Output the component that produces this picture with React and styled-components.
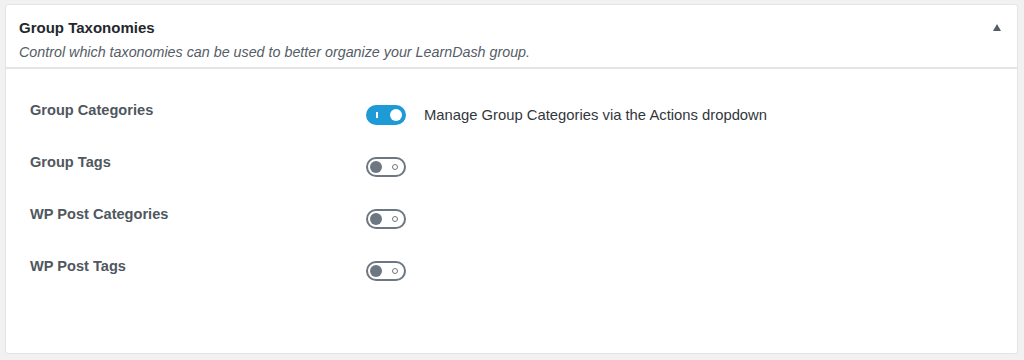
import React from 'react'
import styled, { createGlobalStyle } from 'styled-components'

const GlobalStyle = createGlobalStyle`
  body {
    margin: 0;
    background: #f1f1f1;
    font-family: "Liberation Sans", Arial, sans-serif;
  }
`

const Panel = styled.div`
  margin: 4px 6px 0 5px;
  height: 350px;
  box-sizing: border-box;
  background: #fff;
  border: 1px solid #e2e4e7;
  border-radius: 3px;
  display: flex;
  flex-direction: column;
`

const Header = styled.div`
  position: relative;
  height: 64px;
  box-sizing: border-box;
  padding: 13px 13px 0;
  border-bottom: 2px solid #e2e4e7;
`

const Title = styled.h2`
  margin: 0;
  font-size: 15px;
  line-height: 20px;
  font-weight: 700;
  color: #23282d;
`

const Subtitle = styled.p`
  margin: 4px 0 0;
  font-size: 14.3px;
  line-height: 20px;
  font-style: italic;
  color: #555d66;
`

const Collapse = styled.span`
  position: absolute;
  top: 19px;
  right: 16px;
  width: 0;
  height: 0;
  border-left: 4.5px solid transparent;
  border-right: 4.5px solid transparent;
  border-bottom: 7px solid #555d66;
`

const Body = styled.div`
  padding: 31px 24px 0;
  display: flex;
  flex-direction: column;
`

const Row = styled.div`
  display: grid;
  grid-template-columns: 336px auto 1fr;
  align-items: start;
  height: 52px;
`

const Label = styled.div`
  font-size: 14.6px;
  line-height: 20px;
  font-weight: 700;
  color: #50575e;
`

const Toggle = styled.span`
  position: relative;
  display: block;
  margin-top: 5px;
  width: 40px;
  height: 20px;
  box-sizing: border-box;
  border-radius: 10px;
  border: 2px solid ${({ on }) => (on ? '#1e9ad6' : '#6c7781')};
  background: ${({ on }) => (on ? '#1e9ad6' : '#fff')};
`

const Thumb = styled.span`
  position: absolute;
  top: 2px;
  left: ${({ on }) => (on ? '22px' : '2px')};
  width: 12px;
  height: 12px;
  border-radius: 50%;
  background: ${({ on }) => (on ? '#fff' : '#6c7781')};
`

const OnMark = styled.span`
  position: absolute;
  top: 5px;
  left: 8px;
  width: 2px;
  height: 6px;
  background: #fff;
`

const OffMark = styled.span`
  position: absolute;
  top: 5px;
  right: 6px;
  width: 6px;
  height: 6px;
  box-sizing: border-box;
  border: 1.5px solid #6c7781;
  border-radius: 50%;
`

const Hint = styled.span`
  margin: 5px 0 0 18px;
  font-size: 14.8px;
  line-height: 20px;
  color: #32373c;
`

const Switch = ({ on }) => (
  <Toggle on={on}>
    {on ? <OnMark /> : <OffMark />}
    <Thumb on={on} />
  </Toggle>
)

const rows = [
  { label: 'Group Categories', on: true, hint: 'Manage Group Categories via the Actions dropdown' },
  { label: 'Group Tags', on: false },
  { label: 'WP Post Categories', on: false },
  { label: 'WP Post Tags', on: false },
]

const App = () => (
  <>
    <GlobalStyle />
    <Panel>
      <Header>
        <Title>Group Taxonomies</Title>
        <Subtitle>Control which taxonomies can be used to better organize your LearnDash group.</Subtitle>
        <Collapse />
      </Header>
      <Body>
        {rows.map((row) => (
          <Row key={row.label}>
            <Label>{row.label}</Label>
            <Switch on={row.on} />
            {row.hint && <Hint>{row.hint}</Hint>}
          </Row>
        ))}
      </Body>
    </Panel>
  </>
)

export default App
